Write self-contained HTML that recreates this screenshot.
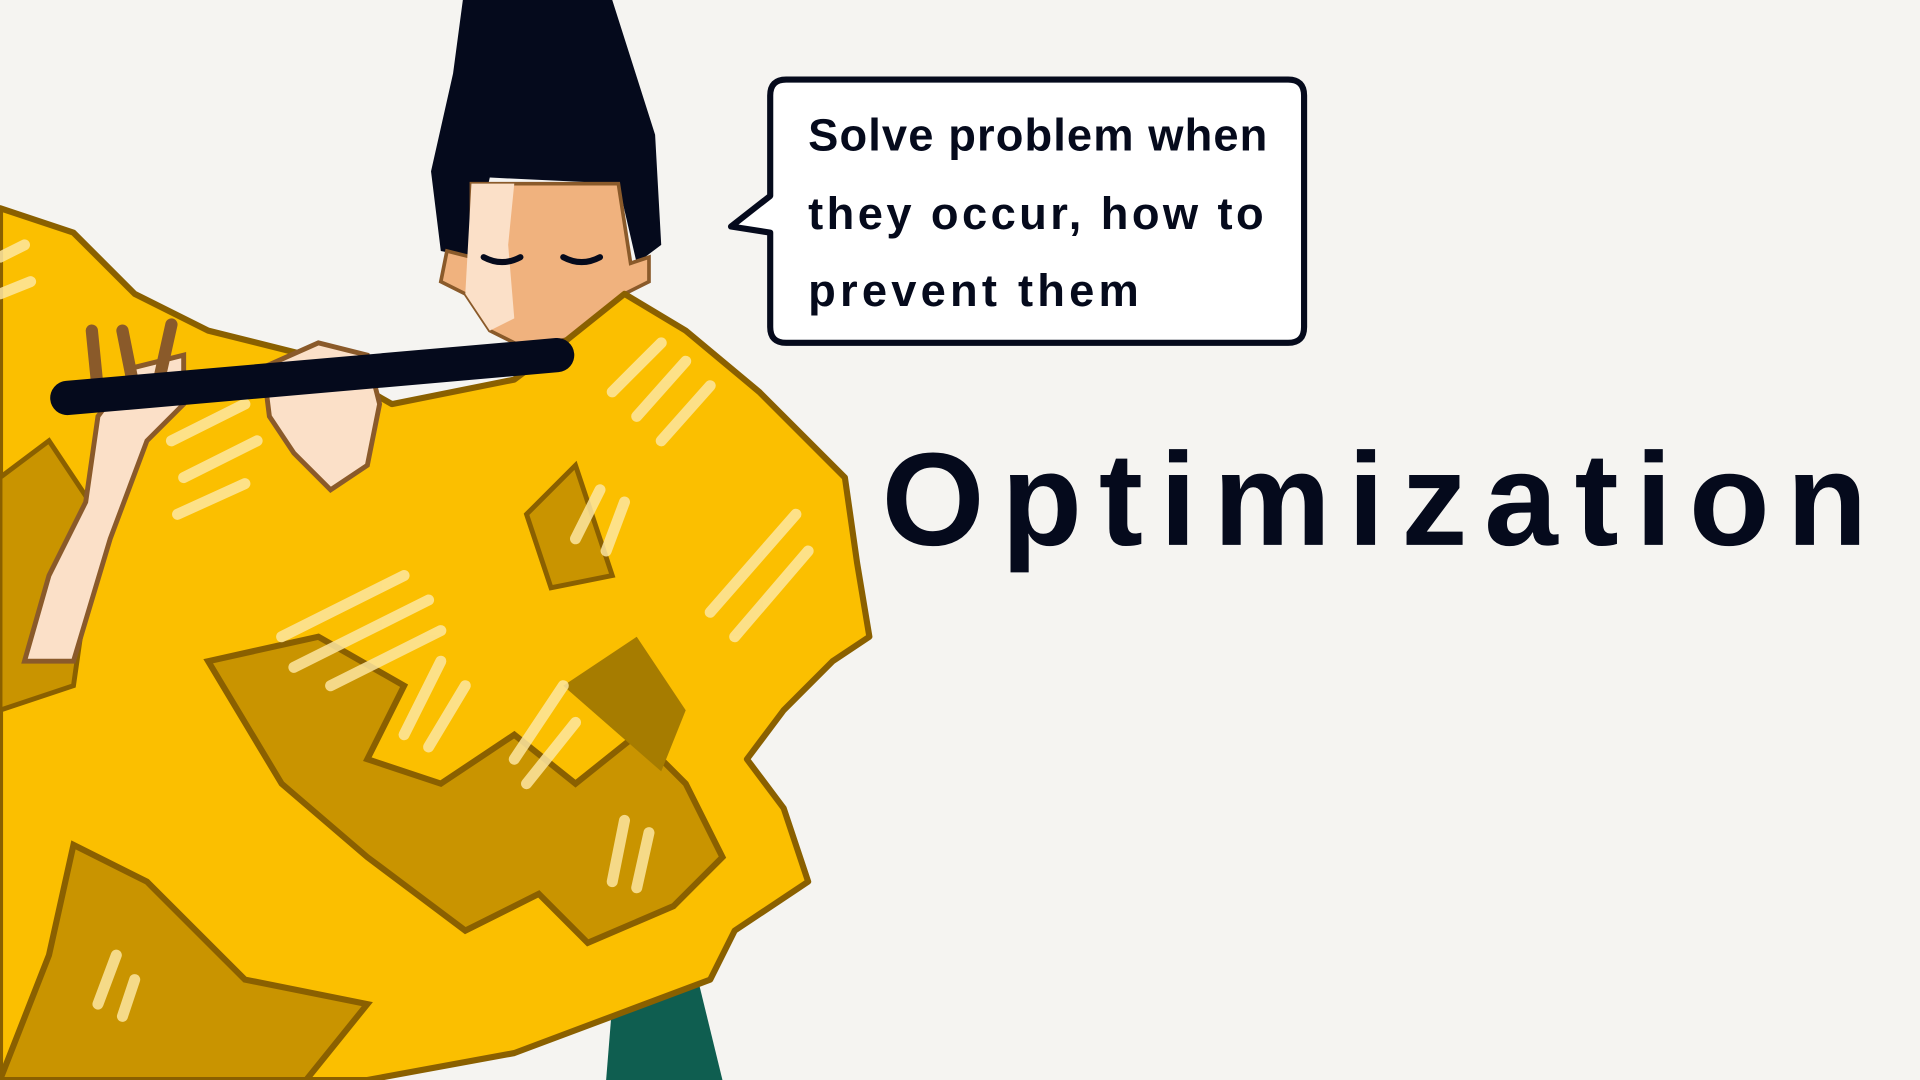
<!DOCTYPE html>
<html><head><meta charset="utf-8"><style>
html,body{margin:0;padding:0;background:#f5f4f1;width:1920px;height:1080px;overflow:hidden}
svg{display:block}
</style></head><body>
<svg width="1920" height="1080" viewBox="0 0 1568 882" xmlns="http://www.w3.org/2000/svg">
<rect width="1568" height="882" fill="#f5f4f1"/>
<path d="M500 820 L570 800 L590 882 L495 882 Z" fill="#0f5e50"/>
<path d="M378 0 L500 0 L535 110 L540 200 L520 215 L505 150 L400 145 L385 210 L360 205 L352 140 L370 60 Z" fill="#050a1c"/>
<path d="M385 150 L505 150 L515 215 L530 210 L530 230 L510 240 L470 275 L430 285 L400 270 L380 240 L360 230 L365 205 L385 210 Z" fill="#f0b27e" stroke="#8a5a2a" stroke-width="3"/>
<path d="M385 150 L420 150 L415 200 L420 260 L400 270 L380 240 Z" fill="#fbe0c8"/>
<path d="M395 210 q15 8 30 0 M460 210 q15 8 30 0" stroke="#050a1c" stroke-width="5" fill="none" stroke-linecap="round"/>
<path d="M0 170 L60 190 L110 240 L170 270 L250 290 L320 330 L420 310 L460 280 L510 240 L560 270 L620 320 L690 390 L700 460 L710 520 L680 540 L640 580 L610 620 L640 660 L660 720 L600 760 L580 800 L500 830 L420 860 L300 882 L0 882 Z" fill="#fbbf00" stroke="#8a6000" stroke-width="5" stroke-linejoin="round"/>
<path d="M60 690 L120 720 L200 800 L300 820 L250 882 L0 882 L40 780 Z" fill="#c99400" stroke="#8a6000" stroke-width="5"/>
<path d="M170 540 L260 520 L330 560 L300 620 L360 640 L420 600 L470 640 L520 600 L560 640 L590 700 L550 740 L480 770 L440 730 L380 760 L300 700 L230 640 Z" fill="#c99400" stroke="#8a6000" stroke-width="5"/>
<path d="M460 560 L520 520 L560 580 L540 630 Z" fill="#a67c00"/>
<path d="M430 420 L470 380 L500 470 L450 480 Z" fill="#c99400" stroke="#8a6000" stroke-width="4"/>
<path d="M0 390 L40 360 L80 420 L60 560 L0 580 Z" fill="#c99400" stroke="#8a6000" stroke-width="4"/>
<g stroke="#fde6a0" stroke-width="9" stroke-linecap="round" fill="none" opacity="0.85">
<path d="M500 320 L540 280 M520 340 L560 295 M540 360 L580 315"/>
<path d="M230 520 L330 470 M240 545 L350 490 M270 560 L360 515"/>
<path d="M580 500 L650 420 M600 520 L660 450"/>
<path d="M470 440 L490 400 M495 450 L510 410"/>
<path d="M330 600 L360 540 M350 610 L380 560"/>
<path d="M140 360 L200 330 M150 390 L210 360 M145 420 L200 395"/>
<path d="M420 620 L460 560 M430 640 L470 590"/>
<path d="M500 720 L510 670 M520 725 L530 680"/>
<path d="M0 210 L20 200 M0 240 L25 230"/>
<path d="M80 820 L95 780 M100 830 L110 800"/>
</g>
<path d="M20 540 L40 470 L70 410 L80 340 L110 300 L150 290 L150 330 L120 360 L90 440 L60 540 Z" fill="#fbe0c8" stroke="#8a5a2a" stroke-width="4"/>
<path d="M215 300 L260 280 L300 290 L310 330 L300 380 L270 400 L240 370 L220 340 Z" fill="#fbe0c8" stroke="#8a5a2a" stroke-width="4"/>
<path d="M75 270 L80 320 M100 270 L110 320 M140 265 L130 310" stroke="#8a5a2a" stroke-width="10" stroke-linecap="round"/>
<path d="M55 325 L455 290" stroke="#050a1c" stroke-width="28" stroke-linecap="round"/>
<path d="M642 65 L1052 65 Q1065 65 1065 78 L1065 267 Q1065 280 1052 280 L642 280 Q629 280 629 267 L629 190 L597 185 L629 160 L629 78 Q629 65 642 65 Z" fill="#fff" stroke="#050a1c" stroke-width="5" stroke-linejoin="round"/>
<g font-family="Liberation Sans, sans-serif" font-size="37" font-weight="bold" fill="#050a1c">
<text x="660" y="123" textLength="375">Solve problem when</text>
<text x="660" y="187" textLength="372">they occur, how to</text>
<text x="660" y="250" textLength="270">prevent them</text>
</g>
<text x="720" y="445" font-family="Liberation Sans, sans-serif" font-size="108" font-weight="bold" fill="#050a1c" textLength="805" lengthAdjust="spacing">Optimization</text>
</svg>
</body></html>
